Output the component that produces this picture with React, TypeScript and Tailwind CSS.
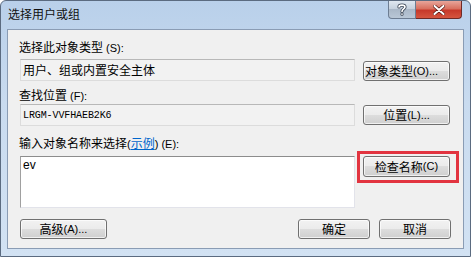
import React from 'react'

const cjk = "font-['Noto_Sans_CJK_SC',sans-serif]"
const mono = "font-['Liberation_Mono',monospace] text-[10px]"
const asc = "font-['Liberation_Sans',sans-serif] text-[11px]"

const Btn = ({ children, className = '' }: { children: React.ReactNode; className?: string }) => (
    <div
        className={`flex items-center justify-center whitespace-nowrap rounded-[3px] border border-[#707070] bg-[linear-gradient(#f2f2f2_0%,#ebebeb_50%,#dddddd_50%,#cfcfcf_100%)] text-[12px] leading-none text-black shadow-[inset_0_0_0_1px_rgba(255,255,255,0.7)] ${className}`}
    >
        {children}
    </div>
)

const Label = ({ children, className = '' }: { children: React.ReactNode; className?: string }) => (
    <div className={`h-[16px] whitespace-nowrap pl-[11px] text-[12px] leading-[16px] text-black ${className}`}>{children}</div>
)

const ReadOnlyBox = ({ children }: { children: React.ReactNode }) => (
    <div className="ml-[1px] flex h-[22px] w-[335px] items-center border border-[#dcdcdc] border-t-[#b8b8b8] bg-[#f2f2f2] pl-[2px] text-[12px] text-black">
        {children}
    </div>
)

export default function App() {
    return (
        <div className={`${cjk} flex h-[257px] w-[471px] flex-col overflow-hidden rounded-t-[6px] border border-[#5b6b80] bg-[linear-gradient(180deg,#b9d0ea_0%,#c9dbef_40%,#d2e2f3_100%)]`}>
            {/* Title bar */}
            <div className="flex h-[28px] shrink-0 items-start">
                <div className="mt-[4px] pl-[7px] text-[12px] leading-[18px] text-[#111]">选择用户或组</div>
                <div className="ml-auto mr-[8px] flex">
                    <div className="flex h-[18px] w-[28px] items-center justify-center rounded-bl-[4px] border border-t-0 border-[#6d7d92] bg-[linear-gradient(#dfe7f0_0%,#c3cfdc_50%,#aab8c8_50%,#b9c7d6_100%)]">
                        <svg width="10" height="13" viewBox="0 0 10 13">
                            <path d="M2 4 C2 1.5 8 1.5 8 4 C8 6 5 6 5 8.5 M5 11 L5 11.2" fill="none" stroke="#3b4656" strokeWidth="3.2" strokeLinecap="round" />
                            <path d="M2 4 C2 1.5 8 1.5 8 4 C8 6 5 6 5 8.5 M5 11 L5 11.2" fill="none" stroke="#ffffff" strokeWidth="1.6" strokeLinecap="round" />
                        </svg>
                    </div>
                    <div className="flex h-[18px] w-[46px] items-center justify-center rounded-br-[4px] border border-l-0 border-t-0 border-[#6e2a26] bg-[linear-gradient(#e8a59a_0%,#d8705f_45%,#c7392a_55%,#d5553f_100%)]">
                        <svg width="12" height="10" viewBox="0 0 12 10">
                            <path d="M1.5 1 L10.5 9 M10.5 1 L1.5 9" stroke="#5a1a14" strokeWidth="3.4" strokeLinecap="round" />
                            <path d="M1.5 1 L10.5 9 M10.5 1 L1.5 9" stroke="#ffffff" strokeWidth="2" strokeLinecap="round" />
                        </svg>
                    </div>
                </div>
            </div>

            {/* Client area */}
            <div className="mx-[6px] mb-[7px] flex flex-1 flex-col border border-[#8a9cb4] bg-[#f0f0f0]">
                <Label className="mt-[9px]">
                    选择此对象类型<span className={asc}> (S):</span>
                </Label>
                <div className="mt-[4px] flex items-start pl-[11px]">
                    <ReadOnlyBox>用户、组或内置安全主体</ReadOnlyBox>
                    <Btn className="ml-[8px] mt-[2px] h-[20px] w-[87px] justify-start pl-[1px]">
                        对象类型<span className={asc}> (O)...</span>
                    </Btn>
                </div>

                <Label className="mt-[6px]">
                    查找位置<span className={asc}> (F):</span>
                </Label>
                <div className="mt-[1px] flex items-start pl-[11px]">
                    <ReadOnlyBox>
                        <span className={`${mono} tracking-[-0.1px]`}>LRGM-VVFHAEB2K6</span>
                    </ReadOnlyBox>
                    <Btn className="ml-[8px] mt-[1px] h-[20px] w-[87px]">
                        位置<span className={asc}> (L)...</span>
                    </Btn>
                </div>

                <Label className="mt-[9px]">
                    输入对象名称来选择<span className={asc}>(</span>
                    <span className="text-[#0066cc] underline">示例</span>
                    <span className={asc}>) (E):</span>
                </Label>
                <div className="flex items-start pl-[11px]">
                    <div className="ml-[1px] mt-[5px] h-[52px] w-[335px] border border-[#e2e3ea] border-l-[#a0a0a0] border-t-[#8c8c8c] bg-white pl-[2px] font-['Liberation_Sans',sans-serif] text-[12px] leading-[16px] text-black">
                        ev
                    </div>
                    <div className="ml-[2px] h-[32px] w-[102px] border-[3px] border-[#e23440] pl-[3px] pt-[2px]">
                        <Btn className="h-[21px] w-[87px]">
                            检查名称<span className={asc}> (C)</span>
                        </Btn>
                    </div>
                </div>

                <div className="mt-[11px] flex pl-[12px]">
                    <Btn className="h-[20px] w-[87px]">
                        高级<span className={asc}> (A)...</span>
                    </Btn>
                    <Btn className="ml-auto h-[20px] w-[72px]">确定</Btn>
                    <Btn className="ml-[9px] mr-[12px] h-[20px] w-[72px]">取消</Btn>
                </div>
            </div>
        </div>
    )
}
